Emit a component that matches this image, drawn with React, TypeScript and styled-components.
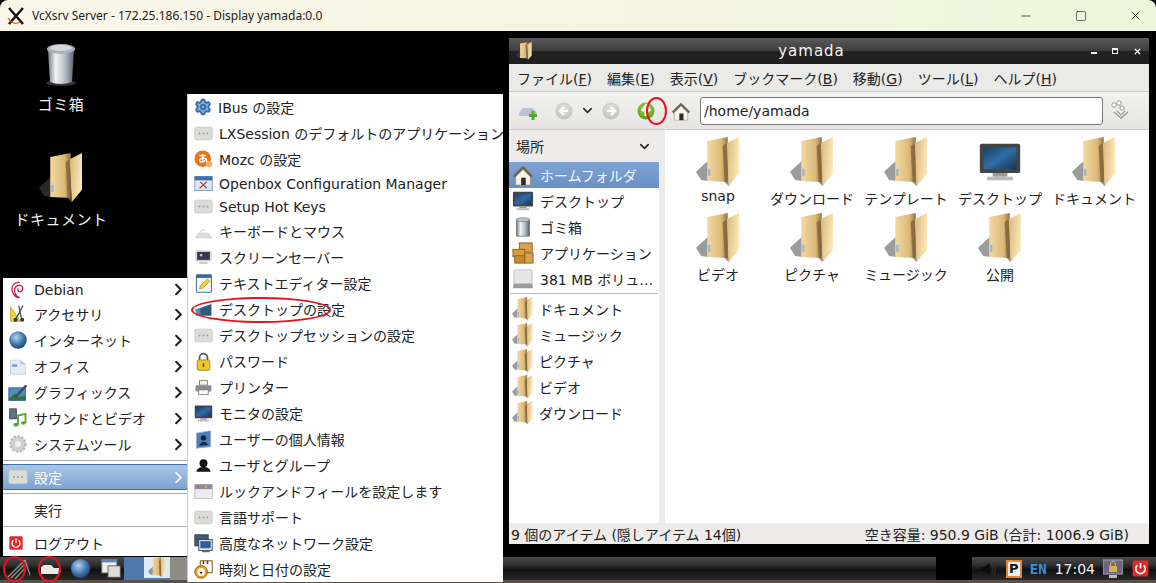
import { FC, ReactNode } from "react";
import styled, { createGlobalStyle } from "styled-components";
import { Settings, Minus, Square, X, ChevronDown, ChevronRight } from "lucide-react";

const UI_FONT = `"DejaVu Sans", "Noto Sans CJK JP", sans-serif`;

const GlobalStyle = createGlobalStyle`
	html, body {
		margin: 0;
		padding: 0;
		background: #000;
	}
	body {
		font-family: ${UI_FONT};
		overflow: hidden;
	}
`;

const Art: FC<{ w: number; h?: number; box?: string; children: ReactNode }> = ({ w, h, box, children }) => (
	<svg width={w} height={h ?? w} viewBox={box ?? "0 0 24 24"} style={{ flex: "none", display: "block" }}>
		{children}
	</svg>
);

const SharedDefs: FC = () => (
	<HiddenSvg>
		<defs>
			<linearGradient id="folderBack" x1="0" y1="0" x2="1" y2="0">
				<stop offset="0" stopColor="#f3d9a4" />
				<stop offset="0.7" stopColor="#dcb877" />
				<stop offset="1" stopColor="#8f7443" />
			</linearGradient>
			<linearGradient id="folderFlap" x1="0" y1="0" x2="1" y2="0.3">
				<stop offset="0" stopColor="#d9b578" />
				<stop offset="1" stopColor="#fbe6b8" />
			</linearGradient>
			<linearGradient id="steel" x1="0" y1="0" x2="1" y2="0">
				<stop offset="0" stopColor="#6f7b86" />
				<stop offset="0.3" stopColor="#f2f5f7" />
				<stop offset="0.7" stopColor="#aab4bd" />
				<stop offset="1" stopColor="#56606a" />
			</linearGradient>
			<linearGradient id="blueScreen" x1="0" y1="0" x2="1" y2="1">
				<stop offset="0" stopColor="#1d3d67" />
				<stop offset="0.5" stopColor="#2f6da6" />
				<stop offset="1" stopColor="#163258" />
			</linearGradient>
			<radialGradient id="globe" cx="0.4" cy="0.35" r="0.7">
				<stop offset="0" stopColor="#b8d4ee" />
				<stop offset="0.6" stopColor="#3f74ab" />
				<stop offset="1" stopColor="#1c3f6d" />
			</radialGradient>
			<radialGradient id="greenBall" cx="0.5" cy="0.35" r="0.7">
				<stop offset="0" stopColor="#a6dc4a" />
				<stop offset="1" stopColor="#4c9a12" />
			</radialGradient>
			<radialGradient id="greyBall" cx="0.5" cy="0.35" r="0.7">
				<stop offset="0" stopColor="#e4e4e2" />
				<stop offset="1" stopColor="#bcbcba" />
			</radialGradient>
		</defs>
	</HiddenSvg>
);

const FolderIcon: FC<{ w: number }> = ({ w }) => (
	<Art w={w} h={w * (48 / 43)} box="0 0 43 48">
		<path d="M0 34 L12 23 V43 L5 42 Z" fill="#4a4a4a" opacity="0.55" />
		<path d="M11 4 L31 0 V44 L11 43 Z" fill="url(#folderBack)" />
		<path d="M30 6 L42 0 V36 L32 48 Z" fill="url(#folderFlap)" />
		<path d="M26 9 L30 6 L32 48 L28 44 Z" fill="#7d6238" opacity="0.75" />
		<rect x="12" y="31" width="2" height="7" fill="#8fb6dc" />
	</Art>
);

const TrashBig: FC = () => (
	<Art w={32} h={44} box="0 0 32 44">
		<ellipse cx="16" cy="40" rx="15" ry="3" fill="#333" />
		<path d="M3 7 L5 39 Q16 43 27 39 L29 7 Z" fill="url(#steel)" />
		<ellipse cx="16" cy="6" rx="14" ry="5" fill="#aab1b8" />
		<ellipse cx="16" cy="5" rx="11" ry="3" fill="#d5d9dd" />
	</Art>
);

const KeysGlyph = (
	<>
		<rect x="1" y="4" width="22" height="16" rx="2" fill="#dcdcd8" stroke="#c6c6c2" />
		<circle cx="7" cy="12" r="1.2" fill="#999" />
		<circle cx="12" cy="12" r="1.2" fill="#999" />
		<circle cx="17" cy="12" r="1.2" fill="#999" />
	</>
);

const monitorGlyph = (
	<>
		<rect x="1" y="2" width="22" height="16" rx="1" fill="#444" />
		<rect x="3" y="4" width="18" height="12" fill="url(#blueScreen)" />
		<rect x="8" y="18" width="8" height="2" fill="#999" />
		<rect x="5" y="20" width="14" height="2" fill="#bbb" />
	</>
);

const glyphs: Record<string, ReactNode> = {
	keys: KeysGlyph,
	mozc: (
		<>
			<circle cx="11" cy="11" r="10.5" fill="#e8741c" />
			<circle cx="19" cy="18" r="4" fill="#f4b06a" />
			<path d="M7 7 H15 M11 5 V15 M15 10 Q15 16 8 15 Q5 12 11 10 Q17 10 16 15" stroke="#fff" strokeWidth="1.7" fill="none" />
		</>
	),
	openbox: (
		<>
			<rect x="1" y="3" width="22" height="18" fill="#dfe5ee" stroke="#6f8db5" />
			<rect x="1" y="3" width="22" height="5" fill="#3f6ea8" />
			<path d="M7 18 L16 10 M8 10 L16 18" stroke="#a0503c" strokeWidth="1.6" />
		</>
	),
	keyboard: (
		<>
			<path d="M2 20 L6 14 H18 L23 20 Z" fill="#dcdcdc" stroke="#bbb" strokeWidth="0.6" />
			<path d="M7 14 Q9 9 13 10" stroke="#bbb" fill="none" />
		</>
	),
	saver: (
		<>
			<rect x="2" y="3" width="20" height="14" rx="1" fill="#cfcfcf" />
			<rect x="4" y="5" width="16" height="10" fill="#3c3358" />
			<circle cx="9" cy="9" r="1.6" fill="#d8c46a" />
			<rect x="7" y="18" width="10" height="2" fill="#bbb" />
		</>
	),
	editor: (
		<>
			<rect x="3" y="1" width="19" height="22" rx="1" fill="#f4f7fb" stroke="#4c6f9b" strokeWidth="1.3" />
			<rect x="3" y="1" width="19" height="4" fill="#2f6da6" />
			<path d="M7 19 L8 15 L17 6 L20 9 L11 18 Z" fill="#f2cb38" stroke="#8d7416" strokeWidth="0.6" />
		</>
	),
	desktop: (
		<>
			<path d="M2 12 L22 5 V20 H3 Z" fill="#31597f" />
			<path d="M2 12 L8 10 V19 H3 Z" fill="#5d8db8" />
		</>
	),
	lock: (
		<>
			<path d="M7 11 V7 A5 5 0 0 1 17 7 V11" stroke="#555" strokeWidth="2.2" fill="none" />
			<rect x="4" y="10" width="16" height="13" rx="2" fill="#f0c92c" stroke="#91761a" />
			<rect x="11" y="14" width="2" height="5" fill="#6b5510" />
		</>
	),
	printer: (
		<>
			<rect x="7" y="3" width="10" height="6" fill="#f2f2f2" stroke="#777" />
			<rect x="2" y="9" width="20" height="8" rx="1.5" fill="#8b8b8b" />
			<rect x="6" y="15" width="12" height="6" fill="#fafafa" stroke="#777" />
		</>
	),
	monitor: monitorGlyph,
	usercard: (
		<>
			<path d="M3 4 L21 1 V21 L3 23 Z" fill="#4a7fb8" stroke="#9bb2cc" />
			<circle cx="12" cy="10" r="3.4" fill="#12263f" />
			<path d="M6 20 Q12 10 18 19 Z" fill="#12263f" />
		</>
	),
	users: (
		<>
			<circle cx="12" cy="9" r="5" fill="#111" />
			<path d="M3 20 Q4 14 12 14 Q20 14 21 20 Z" fill="#111" />
		</>
	),
	look: (
		<>
			<rect x="1" y="3" width="22" height="18" fill="#eceaf2" stroke="#bbb" />
			<rect x="1" y="3" width="22" height="6" fill="#8f8ba6" />
			<circle cx="5" cy="6" r="1.4" fill="#d94a3a" />
			<circle cx="10" cy="6" r="1.4" fill="#55a94a" />
			<circle cx="15" cy="6" r="1.4" fill="#e0b52e" />
		</>
	),
	network: (
		<>
			<rect x="1" y="1" width="17" height="14" fill="#3c5a80" stroke="#333" />
			<rect x="6" y="7" width="17" height="14" fill="#d7e3f0" stroke="#333" />
			<rect x="8" y="9" width="13" height="9" fill="#2f5f96" />
			<rect x="10" y="21" width="10" height="2" fill="#666" />
		</>
	),
	clock: (
		<>
			<rect x="8" y="1" width="15" height="15" fill="#fff" stroke="#8c6a1c" strokeWidth="1.4" />
			<path d="M12 1 V5 M17 1 V5" stroke="#444" strokeWidth="2" />
			<circle cx="9" cy="15" r="8" fill="#ef9a16" stroke="#8c4f0a" />
			<circle cx="9" cy="15" r="5" fill="#fff8e6" />
			<path d="M7 15 H11 L9 18 Z" fill="#222" />
		</>
	),
	debian: (
		<path
			d="M14 3 C7 2 4 8 5 13 C6 18 10 22 14 21 C10 20 7 16 8 11 C9 7 13 5 16 7 C19 9 18 14 14 14 C12 14 11 12 12 10"
			stroke="#c9184a"
			strokeWidth="1.5"
			fill="none"
		/>
	),
	accessories: (
		<>
			<path d="M3 3 L3 21 L15 21 Z" fill="#ecd23a" stroke="#a48f1c" strokeWidth="0.7" />
			<path d="M18 2 L10 17 M13 2 L16 17" stroke="#555" strokeWidth="1.6" />
			<circle cx="9" cy="19" r="2.4" fill="#333" />
			<circle cx="17" cy="19" r="2.4" fill="#333" />
		</>
	),
	internet: <circle cx="12" cy="12" r="10.5" fill="url(#globe)" />,
	office: (
		<>
			<path d="M3 5 H15 L21 10 V22 H3 Z" fill="#e3ecf4" stroke="#c8d2dc" />
			<path d="M15 5 V10 H21 Z" fill="#b6c6d6" />
			<rect x="5" y="10" width="6" height="3" fill="#6ea0cf" />
		</>
	),
	graphics: (
		<>
			<rect x="1" y="7" width="20" height="15" fill="#4b8cc2" stroke="#2f5f8c" />
			<path d="M1 20 L8 14 L14 18 L21 16 V22 H1 Z" fill="#356f45" />
			<path d="M8 17 L21 3 L23 5 L10 19 Z" fill="#445" />
		</>
	),
	sound: (
		<>
			<rect x="2" y="1" width="8" height="12" fill="#63707f" stroke="#36404c" />
			<path d="M12 20 V9 L21 7 V18" stroke="#59a22c" strokeWidth="2.2" fill="none" />
			<ellipse cx="9.5" cy="20" rx="3" ry="2.2" fill="#59a22c" />
			<ellipse cx="18.5" cy="18" rx="3" ry="2.2" fill="#59a22c" />
		</>
	),
	system: (
		<>
			<circle cx="12" cy="12" r="9" fill="#d2d2d2" stroke="#bbb" strokeDasharray="3 1.6" strokeWidth="3" />
			<circle cx="12" cy="12" r="3.5" fill="#f2f2f2" />
		</>
	),
	power: (
		<>
			<rect x="2" y="2" width="20" height="20" rx="2" fill="#dd2b2b" />
			<path d="M8 8 A6 6 0 1 0 16 8" stroke="#fff" strokeWidth="2" fill="none" />
			<path d="M12 5 V12" stroke="#fff" strokeWidth="2" />
		</>
	),
	home: (
		<>
			<path d="M1 13 L12 2 L23 13 L21 15 L12 6 L3 15 Z" fill="#6f6350" />
			<path d="M4 14 L12 6 L20 14 V23 H4 Z" fill="#f6f3e8" stroke="#8b8270" strokeWidth="0.6" />
			<rect x="10" y="15" width="5" height="8" fill="#2c2a26" />
		</>
	),
	trash: (
		<>
			<path d="M5 4 H19 V22 H5 Z" fill="url(#steel)" stroke="#555" strokeWidth="0.7" />
			<ellipse cx="12" cy="4" rx="7.5" ry="2.2" fill="#bcc3c9" stroke="#666" strokeWidth="0.6" />
		</>
	),
	apps: (
		<>
			<rect x="8" y="1" width="14" height="10" fill="#d9a24e" stroke="#8a5f1e" />
			<rect x="1" y="8" width="13" height="8" fill="#dc9c3e" stroke="#8a5f1e" />
			<rect x="3" y="15" width="11" height="8" fill="#c98a2c" stroke="#8a5f1e" />
			<rect x="14" y="12" width="9" height="11" fill="#d9a24e" stroke="#8a5f1e" />
		</>
	),
	drive: (
		<>
			<rect x="2" y="2" width="20" height="16" rx="1.5" fill="#e6e6e6" stroke="#c6c6c6" />
			<path d="M2 17 H22 L23 22 H1 Z" fill="#9c9c9c" />
		</>
	),
};

const Glyph: FC<{ name: string; size?: number }> = ({ name, size = 20 }) =>
	name === "gear" ? (
		<Settings size={size} color="#2f6fb0" fill="#8ab2d9" strokeWidth={2.6} />
	) : (
		<Art w={size}>{glyphs[name]}</Art>
	);

type PrefRow = { icon: string; label: string; short?: boolean };

const prefRows: PrefRow[] = [
	{ icon: "gear", label: "IBus の設定" },
	{ icon: "keys", label: "LXSession のデフォルトのアプリケーション" },
	{ icon: "mozc", label: "Mozc の設定" },
	{ icon: "openbox", label: "Openbox Configuration Manager", short: true },
	{ icon: "keys", label: "Setup Hot Keys", short: true },
	{ icon: "keyboard", label: "キーボードとマウス" },
	{ icon: "saver", label: "スクリーンセーバー" },
	{ icon: "editor", label: "テキストエディター設定" },
	{ icon: "desktop", label: "デスクトップの設定" },
	{ icon: "keys", label: "デスクトップセッションの設定" },
	{ icon: "lock", label: "パスワード" },
	{ icon: "printer", label: "プリンター" },
	{ icon: "monitor", label: "モニタの設定" },
	{ icon: "usercard", label: "ユーザーの個人情報" },
	{ icon: "users", label: "ユーザとグループ" },
	{ icon: "look", label: "ルックアンドフィールを設定します" },
	{ icon: "keys", label: "言語サポート" },
	{ icon: "network", label: "高度なネットワーク設定" },
	{ icon: "clock", label: "時刻と日付の設定" },
];

const startRows: PrefRow[] = [
	{ icon: "debian", label: "Debian", short: true },
	{ icon: "accessories", label: "アクセサリ" },
	{ icon: "internet", label: "インターネット" },
	{ icon: "office", label: "オフィス" },
	{ icon: "graphics", label: "グラフィックス" },
	{ icon: "sound", label: "サウンドとビデオ" },
	{ icon: "system", label: "システムツール" },
];

const placeRows = [
	{ icon: "monitor", label: "デスクトップ" },
	{ icon: "trash", label: "ゴミ箱" },
	{ icon: "apps", label: "アプリケーション" },
	{ icon: "drive", label: "381 MB ボリュ…" },
];

const bookmarkRows = ["ドキュメント", "ミュージック", "ピクチャ", "ビデオ", "ダウンロード"];

const homeItems = ["snap", "ダウンロード", "テンプレート", "デスクトップ", "ドキュメント", "ビデオ", "ピクチャ", "ミュージック", "公開"];

const menuBar: [string, string][] = [
	["ファイル", "F"],
	["編集", "E"],
	["表示", "V"],
	["ブックマーク", "B"],
	["移動", "G"],
	["ツール", "L"],
	["ヘルプ", "H"],
];

const App: FC = () => (
	<Screen>
		<GlobalStyle />
		<SharedDefs />
		<TitleBar>
			<Art w={20} box="0 0 20 20">
				<path d="M3 2 L17 18 M17 2 L3 18" stroke="#111" strokeWidth="2.4" />
				<path d="M2 12 Q7 20 14 16" stroke="#e0552a" strokeWidth="1.2" fill="none" />
			</Art>
			<TitleText>VcXsrv Server - 172.25.186.150 - Display yamada:0.0</TitleText>
			<Caption>
				<Minus size={14} strokeWidth={1.2} />
				<Square size={12} strokeWidth={1.2} />
				<X size={15} strokeWidth={1.2} />
			</Caption>
		</TitleBar>

		<Desktop>
			<DesktopIcon $top={12}>
				<TrashBig />
				<DesktopLabel>ゴミ箱</DesktopLabel>
			</DesktopIcon>
			<DesktopIcon $top={122}>
				<FolderIcon w={44} />
				<DesktopLabel>ドキュメント</DesktopLabel>
			</DesktopIcon>

			<StartMenu>
				{startRows.map((row) => (
					<MenuRow key={row.label} $short={row.short}>
						<Glyph name={row.icon} />
						<RowText>{row.label}</RowText>
						<Chevron size={19} strokeWidth={2.6} />
					</MenuRow>
				))}
				<MenuRule />
				<MenuRow $active>
					<Glyph name="keys" />
					<RowText>設定</RowText>
					<Chevron size={19} strokeWidth={2.2} color="#fff" />
				</MenuRow>
				<MenuRule />
				<MenuRow>
					<IconGap />
					<RowText>実行</RowText>
				</MenuRow>
				<MenuRule />
				<MenuRow>
					<Glyph name="power" size={16} />
					<RowText $indent>ログアウト</RowText>
				</MenuRow>
			</StartMenu>

			<PrefMenu>
				{prefRows.map((row) => (
					<PrefRowBox key={row.label} $short={row.short}>
						<Glyph name={row.icon} size={row.icon === "gear" ? 18 : 19} />
						<RowText>{row.label}</RowText>
					</PrefRowBox>
				))}
			</PrefMenu>

			<FileWindow>
				<WinTitle>
					<FolderIcon w={16} />
					<WinName>yamada</WinName>
					<WinButtons>
						<WinMin />
						<WinMax />
						<X size={9} strokeWidth={3.4} color="#fff" />
					</WinButtons>
				</WinTitle>
				<MenuBar>
					{menuBar.map(([name, key]) => (
						<span key={key}>
							{name}(<u>{key}</u>)
						</span>
					))}
				</MenuBar>
				<ToolBar>
					<Art w={20} box="0 0 20 20">
						<path d="M1 12 L5 7 H15 L19 12 V15 H1 Z" fill="#b7c3d2" />
						<rect x="11" y="13" width="8" height="3" fill="#5aa62a" />
						<rect x="13.5" y="10" width="3" height="9" fill="#5aa62a" />
					</Art>
					<NavBall $gap={17}>
						<path d="M13 9 H6 M9 5 L5 9 L9 13" stroke="#fff" strokeWidth="2.2" fill="none" />
					</NavBall>
					<DownCaret size={15} strokeWidth={2.4} />
					<NavBall $gap={7}>
						<path d="M5 9 H12 M9 5 L13 9 L9 13" stroke="#fff" strokeWidth="2.2" fill="none" />
					</NavBall>
					<NavBall $gap={17} $up>
						<path d="M9 14 V6 M5 9 L9 4 L13 9" stroke="#fff" strokeWidth="3" fill="none" />
					</NavBall>
					<HomeSlot>
						<Glyph name="home" size={20} />
					</HomeSlot>
					<PathBox>/home/yamada</PathBox>
					<Art w={22} box="0 0 22 22">
						<circle cx="4" cy="5" r="2.2" fill="#fff" stroke="#999" />
						<circle cx="9" cy="3" r="2.2" fill="#fff" stroke="#999" />
						<circle cx="12" cy="8" r="2.2" fill="#fff" stroke="#999" />
						<path d="M4 12 L11 18 L18 12 M7 11 L11 15 L15 11" stroke="#999" strokeWidth="1.4" fill="#f7f7f7" />
					</Art>
				</ToolBar>
				<Split>
					<Sidebar>
						<SideHeader>
							場所
							<ChevronDown size={15} strokeWidth={2.4} color="#222" />
						</SideHeader>
						<SideRow $active>
							<Glyph name="home" size={22} />
							ホームフォルダ
						</SideRow>
						{placeRows.map((row) => (
							<SideRow key={row.label}>
								<Glyph name={row.icon} size={22} />
								{row.label}
							</SideRow>
						))}
						<SideRule />
						{bookmarkRows.map((label) => (
							<SideRow key={label}>
								<FolderIcon w={21} />
								{label}
							</SideRow>
						))}
					</Sidebar>
					<Handle />
					<Files>
						{homeItems.map((name) => (
							<FileCell key={name}>
								{name === "デスクトップ" ? (
									<DesktopThumb>
										<Glyph name="monitor" size={44} />
									</DesktopThumb>
								) : (
									<FolderIcon w={44} />
								)}
								<FileName>{name}</FileName>
							</FileCell>
						))}
					</Files>
				</Split>
				<StatusBar>
					<span>9 個のアイテム (隠しアイテム 14個)</span>
					<span>空き容量: 950.9 GiB (合計: 1006.9 GiB)</span>
				</StatusBar>
			</FileWindow>

			<Mark $x={191} $y={266} $w={140} $h={26} />
			<Mark $x={646} $y={66} $w={21} $h={28} />
		</Desktop>

		<Panel>
			<PanelStart>
				<StartFan>
					<Art w={26} box="0 0 26 22">
						<path d="M4 19 L21 2 M7 20 L21 6 M11 21 L21 10 M21 2 L27 20" stroke="#9a9a9a" strokeWidth="1.2" fill="none" />
					</Art>
				</StartFan>
				<Art w={20} h={12} box="0 0 20 12">
					<path d="M1 11 V4 L4 2 H11 L14 5 H19 V11 Z" fill="#e8e8e8" />
				</Art>
				<Art w={21} box="0 0 24 24">
					<circle cx="12" cy="12" r="11" fill="url(#globe)" />
				</Art>
				<Art w={21} box="0 0 24 24">
					<rect x="1" y="2" width="17" height="15" fill="#eee" stroke="#888" />
					<rect x="1" y="2" width="17" height="3" fill="#5b86bd" />
					<rect x="8" y="9" width="14" height="13" fill="#ddd" stroke="#555" />
				</Art>
				<TaskButton>
					<TaskActive>
						<FolderIcon w={18} />
					</TaskActive>
				</TaskButton>
				<TaskRest />
			</PanelStart>
			<Tray>
				<TrayBlack />
				<Art w={18} box="0 0 18 18">
					<path d="M1 7 H4 L10 3 V15 L4 11 H1 Z" fill="#0c0c0c" />
					<path d="M12 6 Q14 9 12 12 M14 4 Q17 9 14 14" stroke="#333" fill="none" />
				</Art>
				<ClipIcon>P</ClipIcon>
				<LangText>EN</LangText>
				<ClockText>17:04</ClockText>
				<Art w={20} box="0 0 20 20">
					<rect x="0" y="1" width="20" height="14" fill="#6f6484" stroke="#aaa" />
					<rect x="6" y="7" width="8" height="6" fill="#d9b44a" />
					<path d="M7.5 7 V5 A2.5 2.5 0 0 1 12.5 5 V7" stroke="#d9b44a" fill="none" />
					<rect x="6" y="16" width="8" height="3" fill="#bbb" />
				</Art>
				<Glyph name="power" size={19} />
			</Tray>
		</Panel>
		<Wallpaper />
		<PanelMark $x={3} />
		<PanelMark $x={38} />
	</Screen>
);

const Screen = styled.div`
	position: relative;
	width: 1156px;
	height: 583px;
	display: flex;
	flex-direction: column;
	overflow: hidden;
	background: #000;
	color: #222;
	font-size: 14px;
`;

const HiddenSvg = styled.svg`
	position: absolute;
	width: 0;
	height: 0;
`;

const TitleBar = styled.div`
	height: 31px;
	flex: none;
	display: flex;
	align-items: center;
	gap: 6px;
	padding-left: 6px;
	border-radius: 8px 8px 0 0;
	background: linear-gradient(90deg, #fbf6e9 0%, #f6f5e3 45%, #edf6dc 100%);
`;

const TitleText = styled.div`
	font-family: "Noto Sans", sans-serif;
	font-size: 12px;
	color: #222;
	white-space: nowrap;
`;

const Caption = styled.div`
	margin-left: auto;
	width: 137px;
	padding-right: 13px;
	box-sizing: border-box;
	display: flex;
	justify-content: space-between;
	align-items: center;
	color: #111;
`;

const Desktop = styled.div`
	position: relative;
	flex: 1;
	background: #000;
`;

const DesktopIcon = styled.div<{ $top: number }>`
	position: absolute;
	left: 6px;
	top: ${(p) => p.$top}px;
	width: 110px;
	display: flex;
	flex-direction: column;
	align-items: center;
	gap: 6px;
`;

const DesktopLabel = styled.div`
	color: #f2f2f2;
	font-size: 15px;
	letter-spacing: 0.5px;
	white-space: nowrap;
`;

const StartMenu = styled.div`
	position: absolute;
	left: 3px;
	top: 247px;
	width: 184px;
	height: 278px;
	background: #fff;
	z-index: 2;
`;

const MenuRow = styled.div<{ $short?: boolean; $active?: boolean }>`
	height: ${(p) => (p.$short ? 23 : 26)}px;
	box-sizing: border-box;
	display: flex;
	align-items: center;
	padding-left: 5px;
	gap: 6px;
	${(p) =>
		p.$active &&
		`
		background: linear-gradient(#a9c6e8, #7da3d2);
		border-top: 1px solid #47709f;
		border-bottom: 1px solid #47709f;
		color: #fff;
	`}
`;

const RowText = styled.span<{ $indent?: boolean }>`
	white-space: nowrap;
	${(p) => p.$indent && "margin-left: 4px;"}
`;

const IconGap = styled.span`
	width: 20px;
`;

const Chevron = styled(ChevronRight)`
	margin-left: auto;
	margin-right: -1px;
`;

const MenuRule = styled.div`
	height: 7px;
	position: relative;
	&::after {
		content: "";
		position: absolute;
		left: 0;
		right: 0;
		top: 3px;
		height: 1px;
		background: #aaa;
	}
`;

const PrefMenu = styled.div`
	position: absolute;
	left: 187px;
	top: 63px;
	width: 316px;
	height: 488px;
	background: #fff;
	border-left: 1px solid #ccc;
	box-sizing: border-box;
	z-index: 3;
`;

const PrefRowBox = styled.div<{ $short?: boolean }>`
	height: ${(p) => (p.$short ? 23 : 26)}px;
	display: flex;
	align-items: center;
	gap: 6px;
	padding-left: 6px;
`;

const FileWindow = styled.div`
	position: absolute;
	left: 509px;
	top: 7px;
	width: 640px;
	height: 506px;
	display: flex;
	flex-direction: column;
	background: #edecea;
`;

const WinTitle = styled.div`
	position: relative;
	height: 26px;
	flex: none;
	display: flex;
	align-items: center;
	padding-left: 7px;
	background: linear-gradient(#5a5a5a 0%, #3d3d3d 48%, #222 50%, #1e1e1e 100%);
`;

const WinName = styled.div`
	flex: 1;
	text-align: center;
	color: #f4f4f4;
	font-size: 15px;
	letter-spacing: 1px;
`;

const WinButtons = styled.div`
	display: flex;
	align-items: center;
	gap: 15px;
	padding: 0 7px 0 0;
`;

const WinMin = styled.span`
	width: 6px;
	height: 2px;
	margin-top: 4px;
	background: #eee;
`;

const WinMax = styled.span`
	width: 4px;
	height: 3px;
	border: 1px solid #eee;
	border-top-width: 2px;
`;

const MenuBar = styled.div`
	height: 28px;
	flex: none;
	display: flex;
	align-items: center;
	gap: 15px;
	padding-left: 8px;
	border-bottom: 1px solid #c9c9c7;
	box-sizing: border-box;
	background: #eaeae8;
`;

const ToolBar = styled.div`
	height: 38px;
	flex: none;
	display: flex;
	align-items: center;
	padding-left: 9px;
	box-sizing: border-box;
	border-bottom: 1px solid #c9c9c7;
	background: linear-gradient(#f1f1f0, #e6e5e3);
`;

const NavCircle = styled.svg<{ $gap: number; $up?: boolean }>`
	flex: none;
	margin-left: ${(p) => p.$gap}px;
	width: 18px;
	height: 18px;
`;

const NavBall: FC<{ $gap: number; $up?: boolean; children: ReactNode }> = ({ $gap, $up, children }) => (
	<NavCircle $gap={$gap} viewBox="0 0 18 18">
		<circle cx="9" cy="9" r="8.5" fill={$up ? "url(#greenBall)" : "url(#greyBall)"} />
		{children}
	</NavCircle>
);

const DownCaret = styled(ChevronDown)`
	margin-left: 7px;
	color: #222;
`;

const HomeSlot = styled.div`
	margin-left: 16px;
	margin-right: 9px;
`;

const PathBox = styled.div`
	width: 403px;
	height: 28px;
	box-sizing: border-box;
	flex: none;
	display: flex;
	align-items: center;
	padding-left: 3px;
	margin-right: 7px;
	border: 1px solid #777;
	border-radius: 3px;
	background: #fff;
`;

const Split = styled.div`
	flex: 1;
	min-height: 0;
	display: flex;
`;

const Sidebar = styled.div`
	width: 150px;
	flex: none;
	background: #fff;
	box-sizing: border-box;
`;

const SideHeader = styled.div`
	height: 32px;
	display: flex;
	align-items: center;
	justify-content: space-between;
	padding: 0 7px;
	background: #edecea;
`;

const SideRow = styled.div<{ $active?: boolean }>`
	height: 26px;
	display: flex;
	align-items: center;
	gap: 6px;
	padding-left: 3px;
	white-space: nowrap;
	${(p) =>
		p.$active &&
		`
		background: linear-gradient(#7fa5d6, #6a90c4);
		color: #f4f7fb;
	`}
`;

const SideRule = styled.div`
	height: 1px;
	margin: 1px 1px 2px;
	background: #bbb;
`;

const Handle = styled.div`
	width: 6px;
	flex: none;
	background: #edecea;
`;

const Files = styled.div`
	flex: 1;
	background: #fff;
	padding: 7px 0 0 6px;
	display: grid;
	grid-template-columns: repeat(5, 94px);
	grid-auto-rows: 76px;
	align-content: start;
`;

const FileCell = styled.div`
	display: flex;
	flex-direction: column;
	align-items: center;
`;

const DesktopThumb = styled.div`
	height: 49px;
	display: flex;
	align-items: center;
`;

const FileName = styled.div`
	margin-top: 2px;
	white-space: nowrap;
`;

const StatusBar = styled.div`
	height: 21px;
	flex: none;
	display: flex;
	align-items: center;
	justify-content: space-between;
	padding: 0 20px 0 2px;
	background: #edecea;
`;

const Panel = styled.div`
	height: 23px;
	flex: none;
	display: flex;
	justify-content: space-between;
	background: linear-gradient(#4a4a4a 0%, #2f2f2f 35%, #111 55%, #2a2a2a 100%);
`;

const PanelStart = styled.div`
	display: flex;
	align-items: center;
	gap: 10px;
	padding-left: 4px;
`;

const StartFan = styled.div`
	width: 26px;
`;

const TaskButton = styled.div`
	width: 46px;
	height: 23px;
	margin-left: -8px;
	display: flex;
	justify-content: flex-end;
	background: #4f79ad;
`;

const TaskActive = styled.div`
	width: 26px;
	height: 21px;
	display: flex;
	justify-content: center;
	background: #dfe9f7;
`;

const TaskRest = styled.div`
	width: 18px;
	height: 23px;
	margin-left: -10px;
	background: #8f8b86;
`;

const Tray = styled.div`
	display: flex;
	align-items: center;
	gap: 8px;
	padding-right: 6px;
`;

const TrayBlack = styled.div`
	width: 36px;
	height: 23px;
	background: #000;
`;

const ClipIcon = styled.div`
	width: 16px;
	height: 18px;
	box-sizing: border-box;
	border: 2px solid #e08a2c;
	background: #eef;
	color: #111;
	font-size: 13px;
	font-weight: 700;
	line-height: 14px;
	text-align: center;
`;

const LangText = styled.span`
	color: #3f90d0;
	font-family: "DejaVu Sans Mono", monospace;
	font-weight: 700;
	font-size: 14px;
`;

const ClockText = styled.span`
	color: #f2f2f2;
	font-size: 14px;
`;

const Wallpaper = styled.div`
	height: 3px;
	flex: none;
	background: #5a5048;
`;

const Mark = styled.div<{ $x: number; $y: number; $w: number; $h: number }>`
	position: absolute;
	left: ${(p) => p.$x}px;
	top: ${(p) => p.$y}px;
	width: ${(p) => p.$w}px;
	height: ${(p) => p.$h}px;
	box-sizing: border-box;
	border: 2px solid #e8121c;
	border-radius: 50%;
	z-index: 5;
`;

const PanelMark = styled.div<{ $x: number }>`
	position: absolute;
	left: ${(p) => p.$x}px;
	top: 556px;
	width: 23px;
	height: 26px;
	box-sizing: border-box;
	border: 2px solid #e8121c;
	border-radius: 50%;
	z-index: 5;
`;

export default App;
